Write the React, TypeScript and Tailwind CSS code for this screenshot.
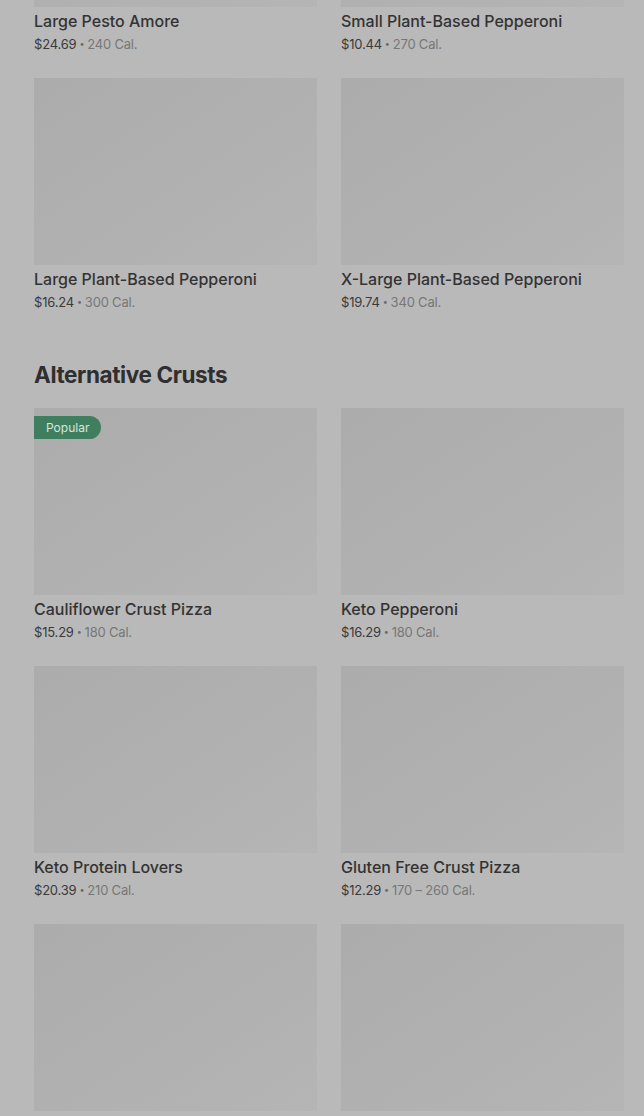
import React from "react";

type Item = { name: string; price: string; cal: string; popular?: boolean };

const top: Item[] = [
  { name: "Large Pesto Amore", price: "$24.69", cal: "240 Cal." },
  { name: "Small Plant-Based Pepperoni", price: "$10.44", cal: "270 Cal." },
  { name: "Large Plant-Based Pepperoni", price: "$16.24", cal: "300 Cal." },
  { name: "X-Large Plant-Based Pepperoni", price: "$19.74", cal: "340 Cal." },
];

const alt: Item[] = [
  { name: "Cauliflower Crust Pizza", price: "$15.29", cal: "180 Cal.", popular: true },
  { name: "Keto Pepperoni", price: "$16.29", cal: "180 Cal." },
  { name: "Keto Protein Lovers", price: "$20.39", cal: "210 Cal." },
  { name: "Gluten Free Crust Pizza", price: "$12.29", cal: "170 – 260 Cal." },
  { name: "Keto Supreme Pizza", price: "$18.49", cal: "200 Cal." },
  { name: "Gluten Free Pepperoni Pizza", price: "$14.29", cal: "190 Cal." },
];

function Card({ item }: { item: Item }) {
  return (
    <div className="flex flex-col">
      <div className="relative h-[187px] w-full bg-gradient-to-br from-[#acacac] via-[#b0b0b0] to-[#b5b5b5]">
        {item.popular && (
          <div className="absolute left-0 top-2 flex h-[23px] items-center rounded-r-full bg-[#3f7f5f] pl-3 pr-3 text-[12px] text-[#d8e5de]">
            Popular
          </div>
        )}
      </div>
      <div className="mt-[2px] text-[16px] font-medium leading-6 text-[#333333]">{item.name}</div>
      <div className="mt-[1px] flex items-center text-[13px] leading-5 tracking-[-0.2px] text-[#3a3a3a]">
        <span>{item.price}</span>
        <span className="mx-[3px] text-[9px] text-[#6a6a6a]">•</span>
        <span className="text-[#777777]">{item.cal}</span>
      </div>
    </div>
  );
}

export default function App() {
  return (
    <div
      className="h-[1116px] overflow-hidden bg-[#b9b9b9] pl-[34px] pr-[20px]"
      style={{ fontFamily: "Inter, 'Noto Sans', sans-serif" }}
    >
      <div className="-mt-[180px] grid grid-cols-2 gap-x-6 gap-y-[24px]">
        {top.map((it) => (
          <Card key={it.name} item={it} />
        ))}
      </div>
      <h2 className="mt-[47px] text-[22.5px] font-bold leading-8 tracking-[-0.4px] text-[#2f2f2f]">
        Alternative Crusts
      </h2>
      <div className="mt-[17px] grid grid-cols-2 gap-x-6 gap-y-[24px]">
        {alt.map((it) => (
          <Card key={it.name} item={it} />
        ))}
      </div>
    </div>
  );
}
